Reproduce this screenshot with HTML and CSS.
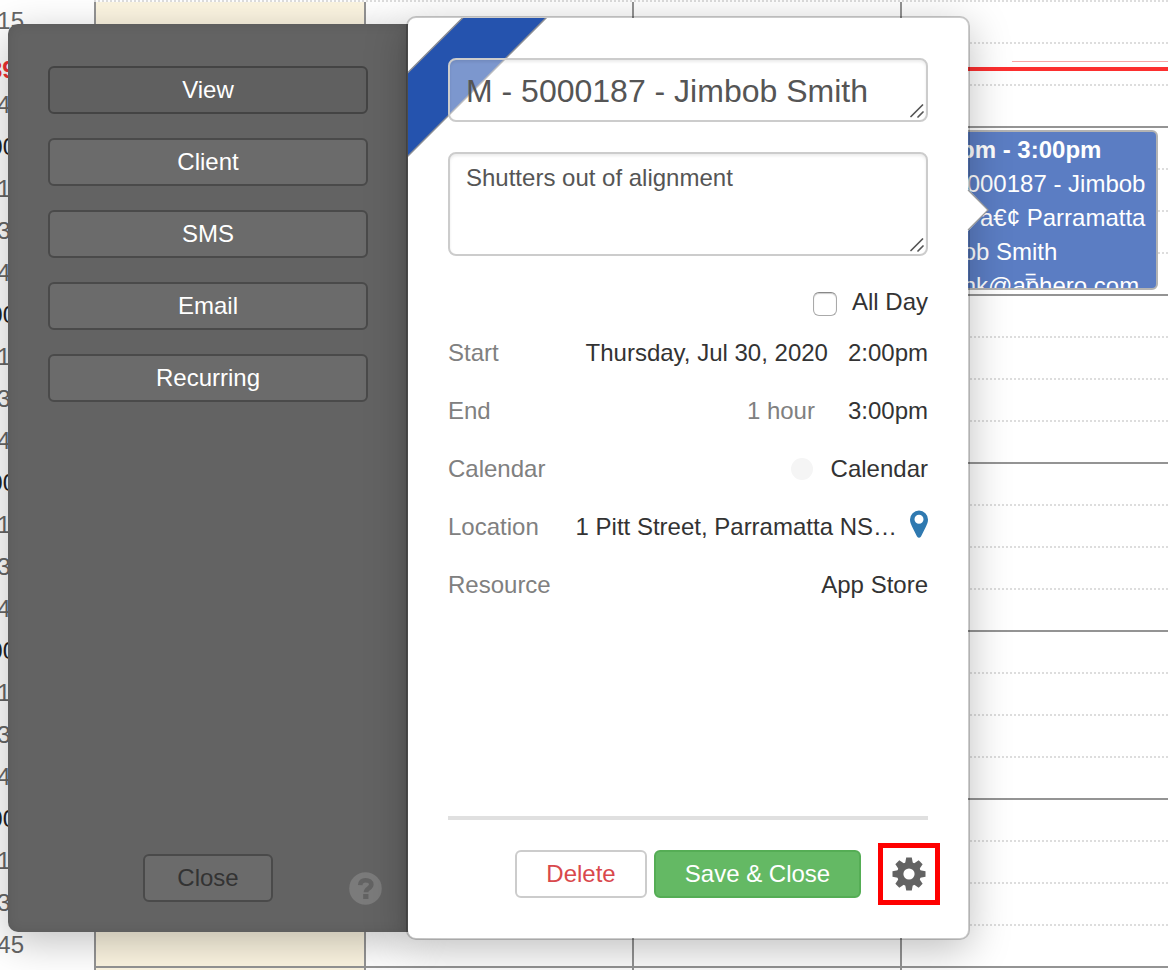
FILE: index.html
```
<!DOCTYPE html>
<html lang="en">
<head>
  <meta charset="UTF-8">
  <meta name="viewport" content="width=device-width, initial-scale=1.0">
  <title>Calendar</title>
  <link rel="stylesheet" href="styles.css">
</head>
<body>
  <div class="calendar" id="calendar"></div>
  <div class="now-label">39</div>
  <div class="now-thin"></div>
  <div class="now-line"></div>

  <div class="event">
    <div class="event-time">2:00pm - 3:00pm</div>
    <div>M - 5000187 - Jimbob</div>
    <div>Smith a€¢ Parramatta</div>
    <div>Jimbob Smith</div>
    <div class="event-mail">schenk@aphero.com</div>
    <div class="event-handle">=</div>
  </div>

  <div class="side">
    <div class="side-menu">
      <button class="side-btn active">View</button>
      <button class="side-btn">Client</button>
      <button class="side-btn">SMS</button>
      <button class="side-btn">Email</button>
      <button class="side-btn">Recurring</button>
    </div>
    <button class="side-btn close-btn">Close</button>
    <div class="help">
      <svg width="33" height="33" viewBox="0 0 33 33">
        <circle cx="16.5" cy="16.5" r="16.3" fill="#7b7b7b"/>
        <path d="M11.2 13.2C11.4 9.8 13.4 8.2 16.6 8.2C20 8.2 22.3 9.9 22.3 12.6C22.3 16.6 17 16.2 17 20.2" fill="none" stroke="#636363" stroke-width="4.6"/>
        <rect x="14.2" y="22" width="5.2" height="5" fill="#636363"/>
      </svg>
    </div>
  </div>

  <div class="dialog">
    <svg class="ribbon" width="142" height="140" viewBox="0 0 142 140">
      <path d="M0 54.5L55 -.5H138.500L0 138Z" fill="#2553ae"/>
      <path d="M-1 55.500L56 -1.500M-1 139L140 -2" stroke="#8a8d94" stroke-width="1.500"/>
    </svg>
    <svg class="pointer" width="22" height="42" viewBox="0 0 22 42">
      <path d="M0 0H1L21 21L1 42H0Z" fill="#fff"/>
      <path d="M1 1L21 21L1 41" fill="none" stroke="#999" stroke-width="1.200"/>
    </svg>

    <div class="field title">M - 5000187 - Jimbob Smith
      <svg class="grip" width="14" height="14" viewBox="0 0 14 14"><path d="M1 12.500L12.500 1M8 13L13 8" stroke="#555" stroke-width="1.700" stroke-linecap="round"/></svg>
    </div>
    <div class="field notes">Shutters out of alignment
      <svg class="grip" width="14" height="14" viewBox="0 0 14 14"><path d="M1 12.500L12.500 1M8 13L13 8" stroke="#555" stroke-width="1.700" stroke-linecap="round"/></svg>
    </div>

    <div class="allday"><span class="checkbox"></span><span class="allday-text">All Day</span></div>

    <div class="row"><span class="label">Start</span><span class="date">Thursday, Jul 30, 2020</span><span class="time">2:00pm</span></div>
    <div class="row"><span class="label">End</span><span class="duration">1 hour</span><span class="time">3:00pm</span></div>
    <div class="row"><span class="label">Calendar</span><span class="dot"></span><span class="cal-name">Calendar</span></div>
    <div class="row">
      <span class="label">Location</span><span class="address">1 Pitt Street, Parramatta NS…</span>
      <svg class="pin" width="18" height="28" viewBox="0 0 18 28">
        <path fill-rule="evenodd" d="M9 .5A9 9 0 0 1 18 9.500C18 12.500 17 14 16 16.500L11 26.500Q9 29 7 26.500L2 16.500C1 14 0 12.500 0 9.500A9 9 0 0 1 9 .5ZM9 4.800A4.500 4.500 0 1 0 9 13.800A4.500 4.500 0 1 0 9 4.800Z" fill="#2f79b0"/>
      </svg>
    </div>
    <div class="row"><span class="label">Resource</span><span class="resource">App Store</span></div>

    <div class="footer">
      <button class="btn delete">Delete</button>
      <button class="btn save">Save &amp; Close</button>
      <div class="gear">
        <svg width="34" height="34" viewBox="-17 -17 34 34">
          <g fill="#636363">
            <g id="teeth">
              <path id="tooth" d="M-4 -10L-2.800 -16.500H2.800L4 -10V10L2.800 16.500H-2.800L-4 10Z"/>
              <use href="#tooth" transform="rotate(90)"/>
            </g>
            <use href="#teeth" transform="rotate(45)"/>
            <circle r="12"/>
          </g>
          <circle r="5.600" fill="#fff"/>
        </svg>
      </div>
    </div>
  </div>

  <script>
    const calendar = document.getElementById("calendar");
    // quarter hour slots, the label sits at the top of its slot
    const labels = ["00", "15", "30", "45"];
    let html = "";
    for (let i = 0; i < 25; i++) {
      const label = labels[i % 4];
      const hour = i % 4 === 0 ? " hour" : "";
      const last = i % 4 === 3 ? " last" : "";
      const text = i === 0 || i === 2 ? "" : label;
      html += `<div class="slot"><div class="slot-label${hour}">${text}</div>`;
      html += `<div class="cells${last}"><div class="cell today"></div><div class="cell"></div><div class="cell"></div><div class="cell"></div></div></div>`;
    }
    calendar.innerHTML = html;
  </script>
</body>
</html>
```
FILE: styles.css
```
* {
  box-sizing: border-box;
}

body {
  font-family: "Liberation Sans", Arial, sans-serif;
  font-size: 24px;
  color: #333;
  background-color: #fff;
  height: 970px;
  margin: 0;
  overflow: hidden;
  position: relative;
}

.calendar {
  margin-top: -40px;
}

.slot {
  display: flex;
  height: 42px;
}

.slot-label {
  width: 94px;
  padding-right: 70px;
  line-height: 38px;
  color: #666;
  display: flex;
  justify-content: flex-end;
}

.slot-label.hour {
  color: #222;
  padding-right: 78px;
}

.cells {
  flex: 1;
  display: grid;
  grid-template-columns: 270px 268px 268px 1fr;
  border-bottom: 2px dotted #ddd;
}

.cells.last {
  border-bottom: 2px solid #949494;
}

.cell {
  border-left: 2px solid #949494;
}

.today {
  background-color: #fcf5e1;
}

.now-label {
  position: absolute;
  left: -11px;
  top: 56px;
  font-weight: bold;
  color: #f03030;
}

.now-thin {
  position: absolute;
  left: 1012px;
  right: 0;
  top: 61px;
  height: 1px;
  background-color: #f9a5a5;
}

.now-line {
  position: absolute;
  left: 94px;
  right: 0;
  top: 67px;
  height: 4px;
  background-color: #fc2f2f;
}

.event {
  position: absolute;
  left: 903px;
  top: 130px;
  width: 255px;
  height: 160px;
  padding: 1px 0 0 7px;
  border: 2px solid #b3b3b3;
  border-radius: 6px;
  background-color: #5b7dc3;
  color: #fff;
  line-height: 34px;
  white-space: nowrap;
  overflow: hidden;
}

.event-time {
  font-weight: bold;
}

.event-handle {
  position: absolute;
  left: 0;
  right: 0;
  bottom: -6px;
  font-size: 20px;
  text-align: center;
}

.side {
  position: absolute;
  left: 8px;
  top: 24px;
  width: 400px;
  height: 908px;
  padding: 42px 40px 30px;
  border-radius: 10px 0 0 10px;
  background-color: #636363;
  box-shadow: 0 10px 40px rgba(0, 0, 0, 0.25), inset 0 0 12px rgba(0, 0, 0, 0.1);
  display: flex;
  flex-direction: column;
  justify-content: space-between;
  align-items: center;
}

.side-menu {
  width: 100%;
  display: flex;
  flex-direction: column;
  gap: 24px;
}

.side-btn {
  height: 48px;
  padding: 0;
  border: 2px solid #4a4a4a;
  border-radius: 6px;
  background-color: #6b6b6b;
  color: #fff;
  font-family: inherit;
  font-size: 24px;
}

.side-btn.active {
  background-color: #606060;
  border-color: #444;
}

.close-btn {
  width: 130px;
  color: #333;
}

.help {
  position: absolute;
  right: 26px;
  bottom: 27px;
  height: 33px;
}

.dialog {
  position: absolute;
  left: 406px;
  top: 16px;
  width: 564px;
  height: 924px;
  padding: 40px;
  border: 2px solid rgba(0, 0, 0, 0.2);
  border-radius: 10px;
  background-color: #fff;
  background-clip: padding-box;
  box-shadow: 0 10px 40px rgba(0, 0, 0, 0.25);
}

.ribbon {
  position: absolute;
  left: 0;
  top: 0;
}

.pointer {
  position: absolute;
  left: 559px;
  top: 171px;
}

.field {
  position: relative;
  border: 2px solid #ccc;
  border-radius: 8px;
  background-color: rgba(255, 255, 255, 0.4);
  box-shadow: inset 0 2px 3px rgba(0, 0, 0, 0.08);
  color: #555;
  padding: 0 16px;
}

.title {
  height: 64px;
  font-size: 32px;
  line-height: 62px;
}

.notes {
  height: 104px;
  margin-top: 30px;
  padding-top: 8px;
  line-height: 32px;
}

.grip {
  position: absolute;
  right: 2px;
  bottom: 2px;
}

.allday {
  height: 68px;
  padding-top: 24px;
  display: flex;
  justify-content: flex-end;
  align-items: center;
}

.checkbox {
  width: 24px;
  height: 24px;
  margin: 4px 15px 0 0;
  border: 1px solid #aaa;
  border-top-color: #888;
  border-radius: 6px;
  box-shadow: inset 0 1px 1px #ccc;
}

.row {
  height: 58px;
  display: flex;
  align-items: center;
  white-space: nowrap;
}

.label {
  color: #808080;
  margin-right: auto;
}

.time {
  margin-left: 20px;
}

.duration {
  color: #808080;
  margin-right: 13px;
}

.dot {
  width: 22px;
  height: 22px;
  margin-right: 18px;
  border-radius: 50%;
  background-color: #f5f5f5;
}

.pin {
  margin: -6px 0 0 13px;
}

.footer {
  margin-top: 202px;
  border-top: 4px solid #e0e0e0;
  padding-top: 30px;
  display: flex;
  justify-content: flex-end;
  align-items: center;
}

.btn {
  height: 48px;
  padding: 0;
  border: 2px solid #ccc;
  border-radius: 6px;
  background-color: #fff;
  font-family: inherit;
  font-size: 24px;
}

.delete {
  width: 132px;
  color: #d9484c;
  margin-right: 7px;
}

.save {
  width: 207px;
  color: #fff;
  background-color: #64b964;
  border-color: #55ad55;
}

.gear {
  width: 62px;
  height: 62px;
  margin: -7px -12px -7px 17px;
  border: 5px solid #fe0000;
  display: flex;
  justify-content: center;
  align-items: center;
}
```
